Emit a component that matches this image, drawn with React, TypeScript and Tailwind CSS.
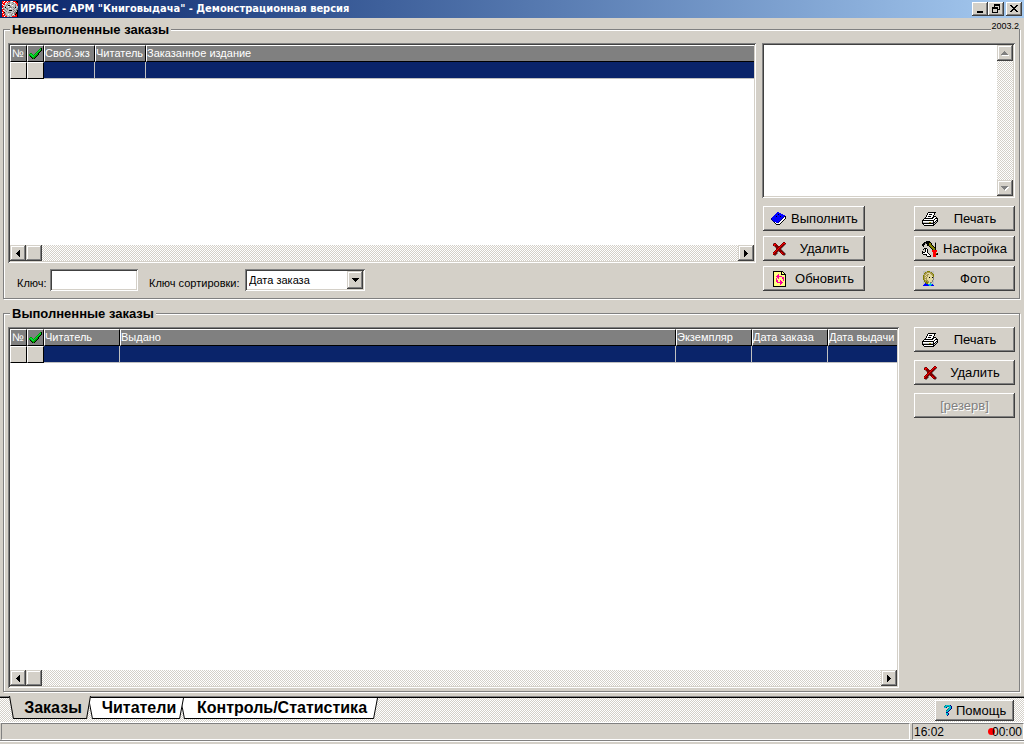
import React from "react";

type Palette = Record<string, string>;

const PALETTE: Palette = {
  K: "#000000",
  W: "#ffffff",
  G: "#808080",
  L: "#c0c0c0",
  B: "#0000ff",
  N: "#000080",
  R: "#ff0000",
  D: "#800000",
  Y: "#ffff80",
  O: "#808000",
  M: "#ff00a0",
  T: "#008080",
  C: "#00c0d0",
  E: "#00a000",
  F: "#00e040",
  P: "#e0d8a0",
  H: "#a89850",
};

function PixelIcon({ rows, className }: { rows: string[]; className?: string }) {
  const width = Math.max(...rows.map((r) => r.length));
  const paths: Record<string, string> = {};
  rows.forEach((row, y) => {
    [...row].forEach((c, x) => {
      if (PALETTE[c]) paths[c] = (paths[c] ?? "") + `M${x} ${y}h1v1h-1z`;
    });
  });
  return (
    <svg
      width={width}
      height={rows.length}
      viewBox={`0 0 ${width} ${rows.length}`}
      shapeRendering="crispEdges"
      aria-hidden="true"
      className={className}
    >
      {Object.entries(paths).map(([c, d]) => (
        <path key={c} d={d} fill={PALETTE[c]} />
      ))}
    </svg>
  );
}

const BOOK = [
  "......BB........",
  ".....BBBBB......",
  "....BBBKBBBB....",
  "...BBBBBBBBBBB..",
  "..BBBKBBBKBBBNK.",
  ".BBBBBBBBBBBNWK.",
  "NBBBBBBBBBBNWWK.",
  "NBBBBBBBBBNWWK..",
  ".NBBBBBBBNWWK...",
  "..NBBBBBNWWK....",
  "...KWBBNWWK.....",
  "....KWWWWK......",
  ".....KKKK.......",
];

const CROSS = [
  "............DD..",
  "..GDD......DRRD.",
  "..DRRD....DRDDG.",
  "..DRDDD..DRDDG..",
  "...GDDDDDRDDG...",
  "....GDDDRDDG....",
  ".....DDRDDG.....",
  ".....DRDDDG.....",
  "....DRDDDDDG....",
  "...DRDDGDDDDG...",
  "..DRDDG..DRDDG..",
  "..RDDDG...DRDDG.",
  "..DDDG.....DDDG.",
  "...GG.......GG..",
];

const REFRESH = [
  "KKKKKKKKKK...",
  "KYYYYYYYKYK..",
  "KYYYYYYYKYYK.",
  "KYYYYMYYKKKKK",
  "KYYYMMYYYYYYK",
  "KYYMMMMMMYYYK",
  "KYYYMMYYYMMYK",
  "KYYMYMYYYMMYK",
  "KYYMYYYYYYMYK",
  "KYYMMYYMYYMYK",
  "KYYMMYYMMYYYK",
  "KYYYMMMMMMYYK",
  "KYYYYYYMMYYYK",
  "KYYYYYYMYYYYK",
  "KYYYYYYYYYYYK",
  "KKKKKKKKKKKKK",
];

const PRINTER = [
  "......KKKKKKKK..",
  ".....KWWWWWWK...",
  ".....KWKKKWWK...",
  "....KWWWWWWK....",
  "....KWKKKWWKKK..",
  "...KWWWWWWKKWWK.",
  "..KKKKKKKKKWWKKK",
  ".KWWWWWWWWWWKWWK",
  "KKKKKKKKKKKKWWKK",
  "KWWWWWWWWWWKWKLK",
  "KLLLLLLOOLLKKLK.",
  "KKKKKKKKKKKKLK..",
  ".KWWWWWWWWWKK...",
  "..KKKKKKKKKK....",
];

const TOOLS = [
  "....KKKK........",
  "..KKKKKKK....G..",
  ".KKGKKKOOK...K..",
  "KKK..KKOOK...K..",
  "KK...KKOOOK..K..",
  ".K.....KOOOK.K..",
  "........KOOOKK..",
  "..KKK....KOOOK..",
  ".K.KWK....KOOK..",
  "...KWK....RRRRR.",
  "K..KWK....RRRRR.",
  "KKKWWK.....RRR..",
  "KWWWWWK....RRROK",
  ".KKKKWWK...RRRKK",
  "....KWWWK..RRR..",
  ".....KKKK..RRR..",
];

const FACE = [
  "LLLLOOOLLLL....",
  "LLOHHHHHOLL....",
  "LOHHPPPHHOL....",
  "LHHPHHPPHHO....",
  "OHPHHPPPPHO....",
  "OHHPHPPPPPO....",
  "OHPHPPKPPKG....",
  "OHHHPPPPPPG....",
  "OHPHPPPPPPG....",
  "LOHHHPPPPGL....",
  "LOHOHHPPPGL....",
  "LLOOOHPGGLL....",
  "LLBOOPPCLLL....",
  "LBBBBCCCCBL....",
  "BBBBBBCCBBB....",
];

const CHECK = [
  "...........EK",
  "..........EFK",
  ".........EFEK",
  "........EFEK.",
  ".......EFEK..",
  ".EE...EFEK...",
  "EFFE.EFEEK...",
  "EEFFEFEEK....",
  ".KEFFEEK.....",
  "..KEEEK......",
  "...KEK.......",
];

const QUESTION = [
  ".TCCCCN.",
  "TCCTTCCN",
  "CCN..CCN",
  "....TCCN",
  "...TCCN.",
  "..TCCN..",
  "..CCN...",
  "..NN....",
  "..CCN...",
  "..CCN...",
  "...N....",
];

const JESTER = [
  "RRWRRWRRLWWRRRKK",
  "RWRRWRLGLLGLWRRK",
  "RRRWLLGGLLLGLLRR",
  "WRRLLGLLWLGLLGLR",
  "RWLLGLKKLLWLLGLR",
  "RRLGLLWLGLLLLGLL",
  "RLLKLLLGGGLGLKLL",
  "WGLLGGLLWLLLGLLG",
  "RRGLLGLLLLLGLLGG",
  "RWLGLLLKKKLLGLGK",
  "RRLLGLLLLLLGLGLK",
  "WRKLLLGGGLLLGGKK",
  "RRGGLLLLLLGLGRKK",
  "RWRGLLWLLGLWGKRK",
  "RRRLGLLLLGLGLRRK",
  "RRWRRLLGLLRRRRRK",
];

const SCROLL_LEFT = ["...K", "..KK", ".KKK", "KKKK", ".KKK", "..KK", "...K"];
const SCROLL_RIGHT = ["K...", "KK..", "KKK.", "KKKK", "KKK.", "KK..", "K..."];
const ARROW_DOWN = ["KKKKKKK", ".KKKKK.", "..KKK..", "...K..."];
const DIM_UP = ["...G....", "..GGG...", ".GGGGG..", "GGGGGGG.", ".WWWWWWW"];
const DIM_DOWN = ["GGGGGGG.", ".GGGGGWW", "..GGGWW.", "...GWW..", "....W..."];
const MINIMIZE = ["......", "......", "......", "......", "......", "......", "KKKKKK", "KKKKKK"];
const RESTORE = [
  "..KKKKKK",
  "..KKKKKK",
  "..K....K",
  "KKKKKK.K",
  "KKKKKK.K",
  "K....KKK",
  "K....K..",
  "K....K..",
  "KKKKKK..",
];
const CLOSE = ["KK....KK", ".KK..KK.", "..KKKK..", "...KK...", "..KKKK..", ".KK..KK.", "KK....KK"];

const raised =
  "bg-[#d4d0c8] shadow-[inset_-1px_-1px_#404040,inset_1px_1px_#ffffff,inset_-2px_-2px_#808080]";
const raisedSoft =
  "bg-[#d4d0c8] shadow-[inset_-1px_-1px_#404040,inset_1px_1px_#d4d0c8,inset_-2px_-2px_#808080,inset_2px_2px_#ffffff]";
const sunken =
  "p-[2px] shadow-[inset_1px_1px_#808080,inset_-1px_-1px_#ffffff,inset_2px_2px_#404040,inset_-2px_-2px_#d4d0c8]";
const dither =
  "bg-[repeating-conic-gradient(#ffffff_0_25%,#d4d0c8_0_50%)] bg-[length:2px_2px]";
const statusPanel =
  "h-[17px] border border-t-[#808080] border-r-white border-b-white border-l-[#808080]";

function CaptionButton({ label, rows }: { label: string; rows: string[] }) {
  return (
    <button
      type="button"
      aria-label={label}
      className={`flex h-[14px] w-4 items-center justify-center pr-px pb-px ${raised}`}
    >
      <PixelIcon rows={rows} />
    </button>
  );
}

function ToolButton({ icon, label, disabled }: { icon?: string[]; label: string; disabled?: boolean }) {
  return (
    <button
      type="button"
      disabled={disabled}
      className={`flex h-[25px] w-full items-center text-[13px] leading-4 ${raised} ${
        icon ? "pr-[3px] pl-2" : "px-2"
      } ${disabled ? "text-[#808080] [text-shadow:1px_1px_#ffffff]" : "text-black"}`}
    >
      {icon && (
        <span className="flex w-4 shrink-0 justify-center">
          <PixelIcon rows={icon} />
        </span>
      )}
      <span className="flex-1 text-center whitespace-nowrap">{label}</span>
    </button>
  );
}

function HorizontalScrollbar() {
  return (
    <div className={`flex h-4 shrink-0 ${dither}`}>
      <button
        type="button"
        aria-label="Влево"
        className={`flex w-4 items-center justify-center ${raisedSoft}`}
      >
        <PixelIcon rows={SCROLL_LEFT} />
      </button>
      <div className={`w-4 ${raisedSoft}`} />
      <button
        type="button"
        aria-label="Вправо"
        className={`ml-auto flex w-4 items-center justify-center ${raisedSoft}`}
      >
        <PixelIcon rows={SCROLL_RIGHT} />
      </button>
    </div>
  );
}

interface Column {
  title: string;
  width: string;
}

function OrdersGrid({ columns, className }: { columns: Column[]; className: string }) {
  const head =
    "h-[17px] overflow-hidden border-t border-l border-b border-t-white border-l-white border-b-black bg-[#808080] p-0 text-left text-[11px] leading-[15px] font-normal whitespace-nowrap text-white";
  const fixedCell =
    "h-[17px] border border-t-white border-l-white border-r-black border-b-black bg-[#d4d0c8] p-0";
  return (
    <div className={`flex min-w-0 flex-col ${sunken} ${className}`}>
      <div className="flex-1 overflow-hidden bg-white">
        <table className="w-full table-fixed border-separate border-spacing-0">
          <colgroup>
            <col className="w-[17px]" />
            <col className="w-[17px]" />
            {columns.map((c) => (
              <col key={c.title} className={c.width} />
            ))}
          </colgroup>
          <thead>
            <tr>
              <th className={`${head} border-r border-r-black pl-px`}>№</th>
              <th className={`${head} border-r border-r-black`} aria-label="Отметка">
                <PixelIcon rows={CHECK} className="mx-auto block" />
              </th>
              {columns.map((c, i) => (
                <th
                  key={c.title}
                  className={`${head} ${i < columns.length - 1 ? "border-r border-r-black" : ""}`}
                >
                  {c.title}
                </th>
              ))}
            </tr>
          </thead>
          <tbody>
            <tr>
              <td className={fixedCell} />
              <td className={fixedCell} />
              {columns.map((c, i) => (
                <td
                  key={c.title}
                  className={`h-[17px] border-b border-[#c0c0c0] bg-[#0a246a] p-0 ${
                    i < columns.length - 1 ? "border-r" : ""
                  }`}
                />
              ))}
            </tr>
          </tbody>
        </table>
      </div>
      <HorizontalScrollbar />
    </div>
  );
}

function GroupBox({
  title,
  className,
  children,
}: {
  title: string;
  className: string;
  children: React.ReactNode;
}) {
  return (
    <section
      className={`relative mr-1 ml-[3px] flex flex-col border border-[#808080] px-1 shadow-[1px_1px_#ffffff,inset_1px_1px_#ffffff] ${className}`}
    >
      <h2 className="-mt-2 mb-[5px] ml-[2px] w-fit bg-[#d4d0c8] px-[2px] text-[13px] leading-4 font-bold">
        {title}
      </h2>
      {children}
    </section>
  );
}

function Tab({ label, active, className }: { label: string; active?: boolean; className: string }) {
  const fill = active ? "#d4d0c8" : "#ffffff";
  return (
    <button
      type="button"
      role="tab"
      aria-selected={!!active}
      className={`relative flex ${active ? "z-20 -mt-[2px] h-[23px]" : "h-[21px]"} ${className}`}
    >
      <svg width="5" height="100%" viewBox="0 0 5 21" preserveAspectRatio="none" aria-hidden="true">
        <path d="M0 0L4 21H5V0z" fill={fill} />
        <path d="M0.5 0L4.5 21" stroke="#000" fill="none" />
      </svg>
      <span
        className={`flex h-full flex-1 items-center justify-center border-b border-black pl-[6px] text-[16px] leading-5 font-bold whitespace-nowrap ${
          active ? "bg-[#d4d0c8] pt-px" : "bg-white pb-px"
        }`}
      >
        {label}
      </span>
      <svg width="5" height="100%" viewBox="0 0 5 21" preserveAspectRatio="none" aria-hidden="true">
        <path d="M0 0V21H1L5 0z" fill={fill} />
        <path d="M4.5 0L0.5 21" stroke="#000" fill="none" />
      </svg>
    </button>
  );
}

const pendingColumns: Column[] = [
  { title: "Своб.экз", width: "w-[51px]" },
  { title: "Читатель", width: "w-[51px]" },
  { title: "Заказанное издание", width: "w-auto" },
];

const doneColumns: Column[] = [
  { title: "Читатель", width: "w-[76px]" },
  { title: "Выдано", width: "w-auto" },
  { title: "Экземпляр", width: "w-[76px]" },
  { title: "Дата заказа", width: "w-[76px]" },
  { title: "Дата выдачи", width: "w-[69px]" },
];

export default function App() {
  return (
    <div className="flex min-h-screen flex-col bg-[#d4d0c8] font-['Liberation_Sans',Arial,sans-serif] text-black">
      <header className="flex h-[18px] items-center bg-linear-to-r from-[#0a246a] to-[#a6caf0] px-[2px]">
        <PixelIcon rows={JESTER} />
        <h1 className="ml-[2px] flex-1 font-['DejaVu_Sans_Condensed','DejaVu_Sans',sans-serif] text-[11px] leading-4 font-bold whitespace-nowrap text-white">
          ИРБИС - АРМ "Книговыдача" - Демонстрационная версия
        </h1>
        <CaptionButton label="Свернуть" rows={MINIMIZE} />
        <CaptionButton label="Восстановить" rows={RESTORE} />
        <div className="w-[2px]" />
        <CaptionButton label="Закрыть" rows={CLOSE} />
      </header>

      <main className="flex flex-1 flex-col pt-[11px] pb-1">
        <GroupBox title="Невыполненные заказы" className="mb-[14px] pb-[7px]">
          <span className="absolute -top-2 right-0 bg-[#d4d0c8] text-[9px] leading-[9px]">2003.2</span>
          <div className="flex gap-[6px]">
            <div className="flex min-w-0 flex-1 flex-col">
              <OrdersGrid columns={pendingColumns} className="h-[220px]" />
              <div className="mt-[6px] flex text-[11px] leading-4">
                <label htmlFor="key" className="ml-[9px] w-[33px] pt-[6px]">
                  Ключ:
                </label>
                <div className={`h-[22px] w-[88px] bg-white ${sunken}`}>
                  <input id="key" type="text" className="block h-full w-full px-1 outline-none" />
                </div>
                <label htmlFor="sort-key" className="ml-[11px] w-24 pt-[6px] whitespace-nowrap">
                  Ключ сортировки:
                </label>
                <div className={`relative h-[22px] w-[120px] bg-white ${sunken}`}>
                  <select
                    id="sort-key"
                    className="block h-full w-full appearance-none bg-white pl-[2px] text-[11px] leading-4 outline-none"
                  >
                    <option>Дата заказа</option>
                  </select>
                  <span
                    className={`pointer-events-none absolute top-[2px] right-[2px] bottom-[2px] flex w-4 items-center justify-center ${raisedSoft}`}
                  >
                    <PixelIcon rows={ARROW_DOWN} />
                  </span>
                </div>
              </div>
            </div>

            <div className="flex w-[253px] shrink-0 flex-col">
              <div className={`flex h-[155px] bg-white ${sunken}`}>
                <textarea
                  aria-label="Сведения о заказе"
                  className="block min-w-0 flex-1 resize-none text-[13px] outline-none"
                />
                <div className={`flex w-4 flex-col justify-between ${dither}`}>
                  <button
                    type="button"
                    aria-label="Вверх"
                    className={`flex h-4 items-center justify-center ${raisedSoft}`}
                  >
                    <PixelIcon rows={DIM_UP} />
                  </button>
                  <button
                    type="button"
                    aria-label="Вниз"
                    className={`flex h-4 items-center justify-center ${raisedSoft}`}
                  >
                    <PixelIcon rows={DIM_DOWN} />
                  </button>
                </div>
              </div>
              <div className="mt-2 flex justify-between pl-px">
                <div className="flex w-[102px] flex-col gap-[5px]">
                  <ToolButton icon={BOOK} label="Выполнить" />
                  <ToolButton icon={CROSS} label="Удалить" />
                  <ToolButton icon={REFRESH} label="Обновить" />
                </div>
                <div className="flex w-[101px] flex-col gap-[5px]">
                  <ToolButton icon={PRINTER} label="Печать" />
                  <ToolButton icon={TOOLS} label="Настройка" />
                  <ToolButton icon={FACE} label="Фото" />
                </div>
              </div>
            </div>
          </div>
        </GroupBox>

        <GroupBox title="Выполненные заказы" className="flex-1 pb-[3px]">
          <div className="flex flex-1 gap-[15px]">
            <OrdersGrid columns={doneColumns} className="flex-1" />
            <div className="flex w-[101px] shrink-0 flex-col gap-2">
              <ToolButton icon={PRINTER} label="Печать" />
              <ToolButton icon={CROSS} label="Удалить" />
              <ToolButton label="[резерв]" disabled />
            </div>
          </div>
        </GroupBox>
      </main>

      <nav className={`flex h-[26px] border-t border-[#808080] ${dither}`}>
        <div className="flex flex-1 border-t border-black pl-[9px]" role="tablist">
          <Tab label="Заказы" active className="w-[82px]" />
          <Tab label="Читатели" className="z-10 -ml-[3px] w-24" />
          <Tab label="Контроль/Статистика" className="-ml-1 w-[198px]" />
        </div>
        <div className="border-t border-black pt-[2px] pr-[10px]">
          <button
            type="button"
            className={`flex h-[21px] w-[79px] items-center gap-1 pl-[9px] text-[13px] leading-4 ${raised}`}
          >
            <PixelIcon rows={QUESTION} />
            Помощь
          </button>
        </div>
      </nav>

      <footer className="border-t border-white pb-[2px] text-[12px] leading-4">
        <div className="flex gap-[2px] border-b border-[#808080] pl-px">
          <div className={`flex-1 ${statusPanel}`} />
          <div className={`flex w-28 items-center justify-between px-px ${statusPanel}`}>
            <span>16:02</span>
            <span className="relative">
              <span className="absolute top-1 -left-1 h-[7px] w-[7px] rounded-full bg-[#ff0000]" />
              <span className="relative">00:00</span>
            </span>
          </div>
        </div>
        <div className="h-px bg-white" />
      </footer>
    </div>
  );
}
